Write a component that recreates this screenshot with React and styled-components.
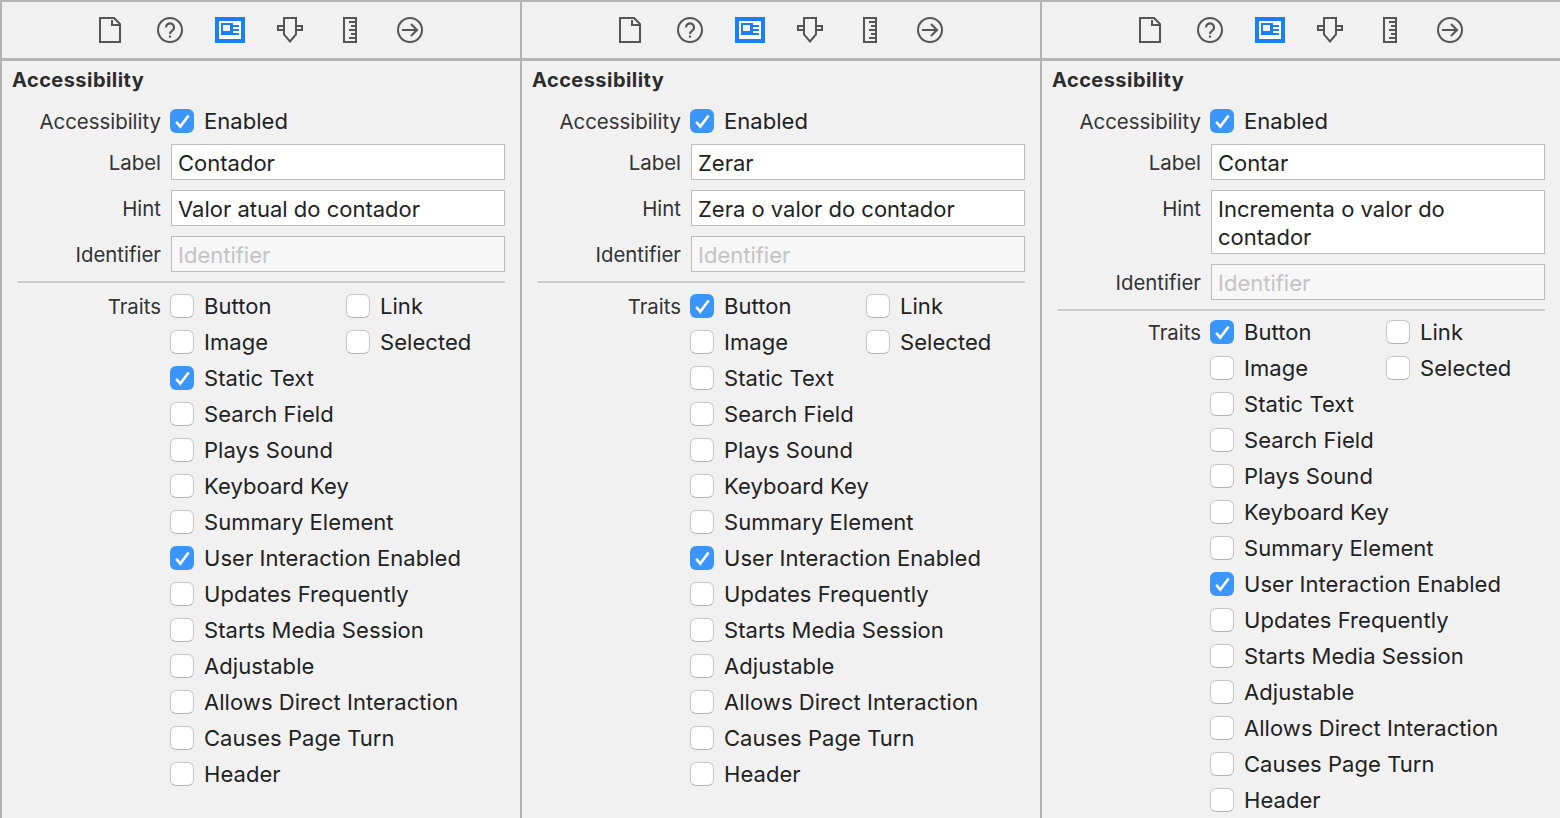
import React from 'react';
import styled, { createGlobalStyle } from 'styled-components';

const Global = createGlobalStyle`
  html, body { margin: 0; padding: 0; height: 818px; overflow: hidden; background: #f1f1f1; }
  body { font-family: Inter, "Liberation Sans", sans-serif; }
`;

const Page = styled.div`
  display: flex;
  width: 1560px;
  height: 818px;
  overflow: hidden;
  background: #f1f1f1;
  border-top: 2px solid #b4b4b4;
  box-sizing: border-box;
`;
const Panel = styled.section`
  flex: 0 0 520px;
  box-sizing: border-box;
  border-left: 2px solid #b4b4b4;
`;
const Toolbar = styled.div`
  height: 59px;
  box-sizing: border-box;
  border-bottom: 3px solid #b4b4b4;
  display: flex;
  justify-content: center;
  align-items: center;
  gap: 30px;
  padding: 0 2px 0 0;
`;
const ToolIcon = styled.svg`
  width: 30px;
  height: 26px;
  display: block;
  fill: none;
  stroke: ${p => p.$stroke ?? '#555'};
  stroke-width: 2;
`;
const Title = styled.h2`
  margin: 0 0 9px;
  padding-left: 10px;
  font-size: 20px;
  font-weight: 700;
  line-height: 39px;
  color: #2c2c2c;
  letter-spacing: 0.45px;
`;
const Row = styled.div`
  display: grid;
  grid-template-columns: 159px 1fr;
  column-gap: 9px;
  padding-right: 15px;
  margin-bottom: ${p => p.$gap ?? 10}px;
`;
const RowLabel = styled.div`
  text-align: right;
  font-size: 20.4px;
  padding-top: 1px;
  line-height: ${p => p.$lh ?? 36}px;
  color: #333;
`;
const Field = styled.div`
  margin-left: 1px;
  box-sizing: border-box;
  border: 1.5px solid #bcbcbc;
  background: ${p => (p.$placeholder ? '#f7f7f7' : '#fff')};
  padding: 4px 6px 2px 6px;
  font-size: 22px;
  line-height: 28px;
  color: ${p => (p.$placeholder ? '#c4c4c4' : '#222')};
`;
const Divider = styled.hr`
  margin: 0 15px 0 16px;
  border: 0;
  height: 2px;
  background: #cbcbcb;
`;
const Traits = styled.div`
  padding-top: ${p => p.$top}px;
  display: grid;
  grid-template-columns: 159px 1fr;
  column-gap: 9px;
`;
const TraitList = styled.div`
  display: grid;
  grid-template-columns: 176px 1fr;
  grid-auto-rows: 36px;
`;
const Option = styled.label`
  display: flex;
  align-items: center;
  gap: 10px;
  grid-column: ${p => (p.$wide ? '1 / -1' : 'auto')};
  height: ${p => p.$h ?? 36}px;
  font-size: 22px;
  letter-spacing: 0.05px;
  color: #222;
  white-space: nowrap;
`;
const Box = styled.span`
  flex: 0 0 24px;
  width: 24px;
  height: 24px;
  box-sizing: border-box;
  border-radius: 6px;
  display: block;
  background: ${p => (p.$on ? '#3a96fb' : '#fff')};
  border: ${p => (p.$on ? '0' : '1.5px solid #c6c6c6')};
  border-bottom-color: ${p => (p.$on ? 'transparent' : '#b4b4b4')};
`;
const Tick = styled.svg`
  display: block;
  width: 24px;
  height: 24px;
  fill: none;
  stroke: #fff;
  stroke-width: 2.6;
`;

const DocIcon = () => (
  <ToolIcon viewBox="0 0 30 26">
    <path d="M5 1H19L25 7V25H5Z" />
    <path d="M17 3V8H25" />
  </ToolIcon>
);
const HelpIcon = () => (
  <ToolIcon viewBox="0 0 30 26">
    <circle cx="15" cy="13" r="12" />
    <path d="M11 10.5a4 4 0 1 1 6.2 3.2c-1.4.9-2.2 1.4-2.2 3.3" strokeWidth="2.2" />
    <path d="M13.9 18.5h2.2v2.2h-2.2z" fill="#555" stroke="none" />
  </ToolIcon>
);
const IdentityIcon = () => (
  <ToolIcon viewBox="0 0 30 26" $stroke="#fff">
    <rect width="30" height="26" fill="#1a7ffb" stroke="none" />
    <rect x="5" y="5" width="20" height="16" />
    <rect x="8" y="8" width="7" height="6" fill="#f1f1f1" stroke="none" />
    <path d="M18 7H24M18 11H24M18 15H24M6 19H24" />
  </ToolIcon>
);
const PinIcon = () => (
  <ToolIcon viewBox="0 0 30 26">
    <path d="M9 1H21V17.5L15 24.5L9 17.5Z" />
    <path d="M9 9H3V13H9M21 9H27V13H21" />
  </ToolIcon>
);
const RulerIcon = () => (
  <ToolIcon viewBox="0 0 30 26">
    <path d="M9 1H21V25H9Z" />
    <path d="M21 5H14M21 9H16M21 13H14M21 17H16M21 21H14" />
  </ToolIcon>
);
const ArrowIcon = () => (
  <ToolIcon viewBox="0 0 30 26">
    <circle cx="15" cy="13" r="12" />
    <path d="M7 13H22M16 7L22 13L16 19" />
  </ToolIcon>
);

const Check = ({ on }) => (
  <Box $on={on}>
    {on && (
      <Tick viewBox="0 0 24 24">
        <path d="M6.2 12.8L10.3 17.6L18.6 6.4" />
      </Tick>
    )}
  </Box>
);

const traitNames = [
  'Button', 'Link', 'Image', 'Selected', 'Static Text', 'Search Field', 'Plays Sound', 'Keyboard Key',
  'Summary Element', 'User Interaction Enabled', 'Updates Frequently', 'Starts Media Session',
  'Adjustable', 'Allows Direct Interaction', 'Causes Page Turn', 'Header',
];
const narrow = new Set(['Button', 'Link', 'Image', 'Selected']);

const panels = [
  { label: 'Contador', hint: ['Valor atual do contador'], on: ['Static Text', 'User Interaction Enabled'], top: 5 },
  { label: 'Zerar', hint: ['Zera o valor do contador'], on: ['Button', 'User Interaction Enabled'], top: 5 },
  { label: 'Contar', hint: ['Incrementa o valor do', 'contador'], on: ['Button', 'User Interaction Enabled'], top: 3 },
];

const InspectorPanel = ({ label, hint, on, top }) => (
  <Panel>
    <Toolbar>
      <DocIcon />
      <HelpIcon />
      <IdentityIcon />
      <PinIcon />
      <RulerIcon />
      <ArrowIcon />
    </Toolbar>
    <Title>Accessibility</Title>
    <Row $gap={11}>
      <RowLabel $lh={23}>Accessibility</RowLabel>
      <Option $h={24}>
        <Check on />
        Enabled
      </Option>
    </Row>
    <Row>
      <RowLabel $lh={35}>Label</RowLabel>
      <Field>{label}</Field>
    </Row>
    <Row>
      <RowLabel $lh={35}>Hint</RowLabel>
      <Field>
        {hint.map(line => (
          <div key={line}>{line}</div>
        ))}
      </Field>
    </Row>
    <Row $gap={9}>
      <RowLabel $lh={35}>Identifier</RowLabel>
      <Field $placeholder>Identifier</Field>
    </Row>
    <Divider />
    <Traits $top={top}>
      <RowLabel $lh={35}>Traits</RowLabel>
      <TraitList>
        {traitNames.map(name => (
          <Option key={name} $wide={!narrow.has(name)}>
            <Check on={on.includes(name)} />
            {name}
          </Option>
        ))}
      </TraitList>
    </Traits>
  </Panel>
);

export default function App() {
  return (
    <>
      <Global />
      <Page>
        {panels.map(p => (
          <InspectorPanel key={p.label} {...p} />
        ))}
      </Page>
    </>
  );
}
